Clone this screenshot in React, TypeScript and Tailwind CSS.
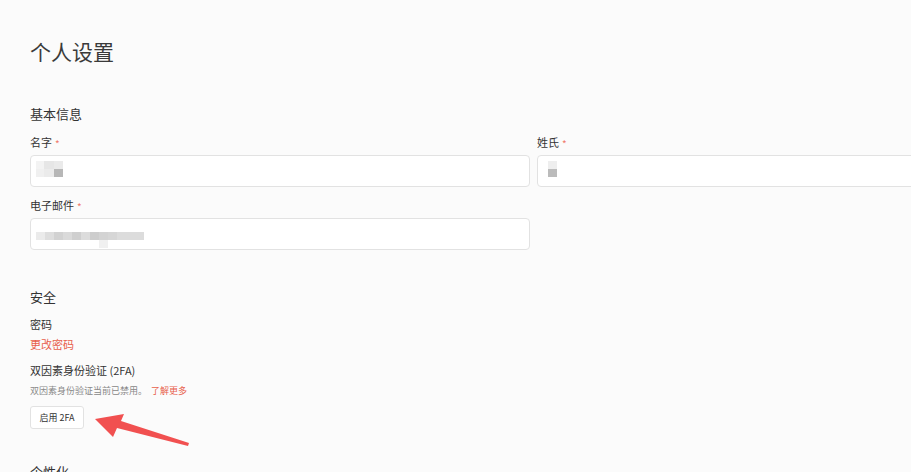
import React from 'react';

const font = { fontFamily: '"Noto Sans CJK SC", "Noto Sans", sans-serif' };

function Label({ text, required }: { text: string; required?: boolean }) {
  return (
    <div className="text-[11px] leading-[16px] text-[#333] mb-[5px] flex items-center">
      <span>{text}</span>
      {required && <span className="ml-[3px] mt-[3px] text-[10px] leading-[12px] text-[#f07a6a]">*</span>}
    </div>
  );
}

function Mosaic({ rows }: { rows: { w: number; c: string }[][] }) {
  return (
    <div className="flex flex-col">
      {rows.map((row, i) => (
        <div key={i} className="flex h-[8px]">
          {row.map((b, j) => (
            <div key={j} className="h-full" style={{ width: b.w, background: b.c }} />
          ))}
        </div>
      ))}
    </div>
  );
}

function Field({ label, rows, offset = 5 }: { label: string; rows: { w: number; c: string }[][]; offset?: number }) {
  return (
    <div>
      <Label text={label} required />
      <div className="h-[32px] bg-white border border-[#e2e2e2] rounded-[4px] pt-[5px]" style={{ paddingLeft: offset }}>
        <Mosaic rows={rows} />
      </div>
    </div>
  );
}

export default function App() {
  return (
    <div className="relative w-[911px] h-[472px] overflow-hidden bg-[#fbfbfb] text-[#333]" style={font}>
      <div className="pl-[30px] pt-[37px] w-[1040px]">
        <h1 className="text-[21px] leading-[28px] text-[#3a3a3a] font-normal">个人设置</h1>

        <h2 className="mt-[39px] text-[13px] leading-[20px] text-[#333]">基本信息</h2>
        <div className="mt-[10px] grid grid-cols-[500px_500px] gap-x-[7px] gap-y-[10px]">
          <Field
            label="名字"
            rows={[
              [
                { w: 8, c: '#f3f3f3' },
                { w: 10, c: '#e6e6e6' },
                { w: 9, c: '#eaeaea' },
              ],
              [
                { w: 8, c: '#f0f0f0' },
                { w: 10, c: '#ebebeb' },
                { w: 9, c: '#b7b7b7' },
              ],
            ]}
          />
          <Field
            label="姓氏"
            offset={10}
            rows={[
              [{ w: 9, c: '#eeeeee' }],
              [{ w: 9, c: '#bbbbbb' }],
            ]}
          />
          <Field
            label="电子邮件"
            rows={[
              [{ w: 1, c: 'transparent' }],
              [
                { w: 9, c: '#ebebeb' },
                { w: 9, c: '#dedede' },
                { w: 9, c: '#d2d2d2' },
                { w: 9, c: '#dadada' },
                { w: 9, c: '#cfcfcf' },
                { w: 9, c: '#dcdcdc' },
                { w: 9, c: '#cdcdcd' },
                { w: 9, c: '#d3d3d3' },
                { w: 9, c: '#d6d6d6' },
                { w: 27, c: '#dcdcdc' },
              ],
              [
                { w: 63, c: 'transparent' },
                { w: 9, c: '#f0f0f0' },
              ],
            ]}
          />
        </div>

        <h2 className="mt-[37px] text-[13px] leading-[20px] text-[#333]">安全</h2>
        <div className="mt-[9px] text-[11px] leading-[16px] text-[#333]">密码</div>
        <div className="mt-[4px] text-[11px] leading-[16px] text-[#e8604c]">更改密码</div>
        <div className="mt-[10px] text-[11px] leading-[16px] text-[#333]">双因素身份验证 (2FA)</div>
        <div className="mt-[6px] text-[9px] leading-[14px] text-[#888]">
          双因素身份验证当前已禁用。
          <span className="ml-[4px] text-[#e8604c]">了解更多</span>
        </div>
        <button className="mt-[8px] h-[23px] w-[54px] bg-white border border-[#e2e2e2] rounded-[3px] text-[9px] text-[#333] flex items-center justify-center">
          启用 2FA
        </button>

        <h2 className="mt-[33px] text-[13px] leading-[20px] text-[#333]">个性化</h2>
      </div>

      <svg className="absolute left-0 top-0 pointer-events-none" width="911" height="472">
        <polygon
          points="95,419 124,414 121,421 189,443 188,446 117,428 113,437"
          fill="#f15050"
        />
      </svg>
    </div>
  );
}
